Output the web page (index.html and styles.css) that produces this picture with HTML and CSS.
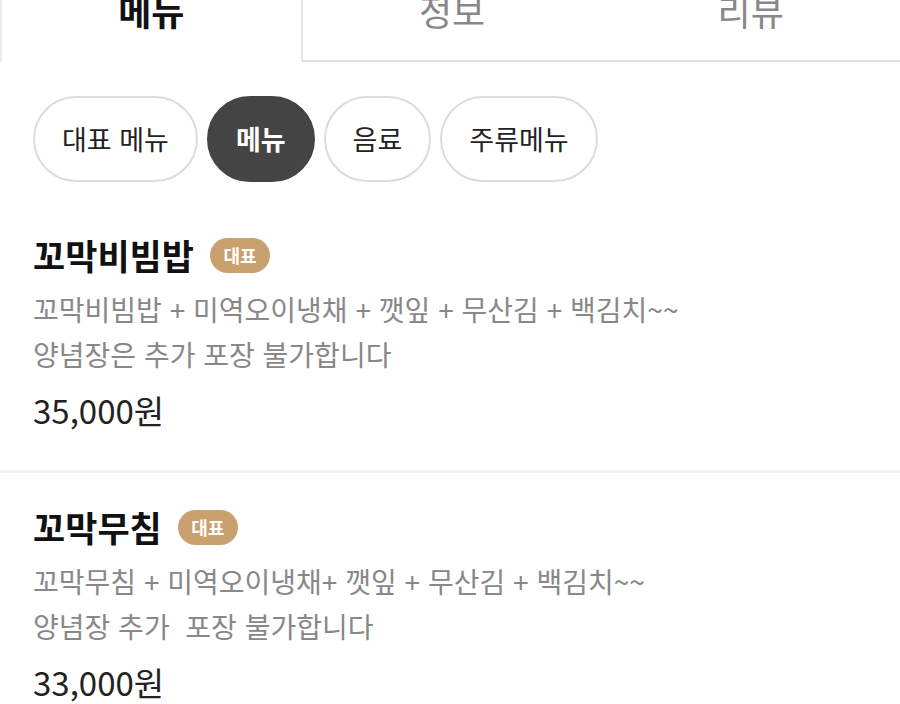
FILE: index.html
```html
<!DOCTYPE html>
<html lang="ko">
<head>
    <meta charset="UTF-8">
    <meta name="viewport" content="width=device-width, initial-scale=1.0">
    <title>메뉴</title>
    <link rel="stylesheet" href="styles.css">
</head>
<body>

    <div class="tabs">
        <div class="tab active">메뉴</div>
        <div class="tab">정보</div>
        <div class="tab">리뷰</div>
    </div>

    <div class="chips">
        <div class="chip">대표 메뉴</div>
        <div class="chip selected">메뉴</div>
        <div class="chip">음료</div>
        <div class="chip">주류메뉴</div>
    </div>

    <div class="menu-item">
        <div class="menu-title">
            <h2>꼬막비빔밥</h2>
            <span class="badge">대표</span>
        </div>
        <p class="desc">꼬막비빔밥 + 미역오이냉채 + 깻잎 + 무산김 + 백김치~~<br>양념장은 추가 포장 불가합니다</p>
        <p class="price">35,000원</p>
    </div>

    <div class="menu-item">
        <div class="menu-title">
            <h2>꼬막무침</h2>
            <span class="badge">대표</span>
        </div>
        <p class="desc">꼬막무침 + 미역오이냉채+ 깻잎 + 무산김 + 백김치~~<br>양념장 추가&nbsp; 포장 불가합니다</p>
        <p class="price">33,000원</p>
    </div>

</body>
</html>
```

FILE: styles.css
```css
body {
    font-family: "Noto Sans CJK KR", "Noto Sans", sans-serif;
    background-color: #fff;
    margin: 0;
    overflow: hidden;
}
.tabs {
    display: flex;
    margin-top: -12px;
}
.tab {
    flex: 1;
    text-align: center;
    font-size: 36px;
    line-height: 44px;
    padding-bottom: 28px;
    color: #888;
    border-bottom: 2px solid #dedede;
}
.tab.active {
    color: #111;
    font-weight: bold;
    border-bottom: none;
    padding-bottom: 30px;
    border-left: 2px solid #ececec;
    border-right: 2px solid #e4e4e4;
}
.chips {
    display: flex;
    gap: 9px;
    padding: 0 33px;
    margin-top: 34px;
    margin-bottom: 19px;
}
.chip {
    height: 82px;
    line-height: 82px;
    padding: 0 27px;
    border: 2px solid #dcdcdc;
    border-radius: 43px;
    font-size: 27px;
    color: #222;
}
.chip.selected {
    background: #444;
    border-color: #444;
    color: #fff;
    font-weight: bold;
}
.menu-item {
    padding: 32px 33px 38px;
    border-bottom: 3px solid #f3f3f3;
}
.menu-title {
    display: flex;
    align-items: center;
    height: 44px;
}
.menu-title h2 {
    margin: 0;
    font-size: 35px;
    line-height: 44px;
    color: #111;
}
.badge {
    margin-left: 16px;
    width: 60px;
    height: 35px;
    line-height: 35px;
    border-radius: 18px;
    background: #c9a16f;
    color: #fff;
    font-size: 18px;
    font-weight: bold;
    text-align: center;
}
.desc {
    margin: 10px 0 0;
    font-size: 28px;
    line-height: 45px;
    color: #888;
}
.price {
    margin: 11px 0 0;
    font-size: 33px;
    line-height: 44px;
    color: #222;
}
```
